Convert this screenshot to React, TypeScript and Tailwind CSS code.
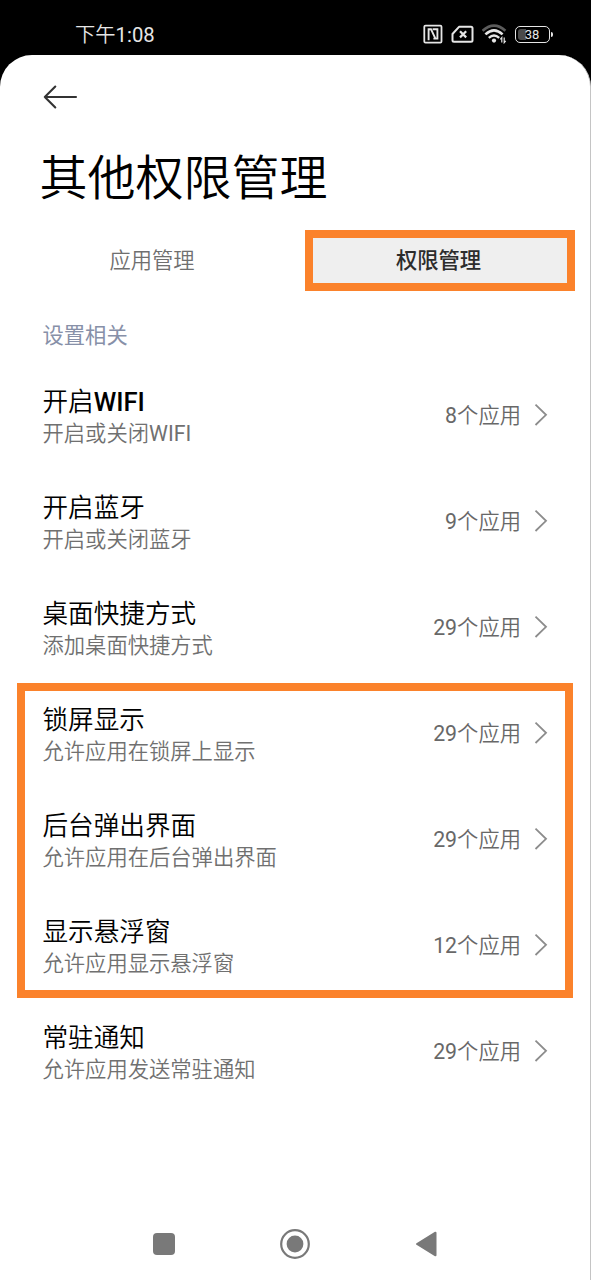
type Permission = {
  name: string;
  desc: string;
  count: number;
};

const before: Permission[] = [
  { name: "开启WIFI", desc: "开启或关闭WIFI", count: 8 },
  { name: "开启蓝牙", desc: "开启或关闭蓝牙", count: 9 },
  { name: "桌面快捷方式", desc: "添加桌面快捷方式", count: 29 },
];

const highlighted: Permission[] = [
  { name: "锁屏显示", desc: "允许应用在锁屏上显示", count: 29 },
  { name: "后台弹出界面", desc: "允许应用在后台弹出界面", count: 29 },
  { name: "显示悬浮窗", desc: "允许应用显示悬浮窗", count: 12 },
];

const after: Permission[] = [
  { name: "常驻通知", desc: "允许应用发送常驻通知", count: 29 },
];

function StatusBar() {
  return (
    <div className="flex h-[55px] items-start justify-between pl-[75px] pr-[38px] text-[#e6e6e6]">
      <span className="mt-[21px] h-7 text-[20.3px] font-[350] leading-7">
        下午<span className="font-normal">1:08</span>
      </span>
      <div className="mt-[24px] flex h-5 items-center">
        {/* NFC */}
        <svg width="20" height="20" viewBox="0 0 20 20" fill="none" stroke="currentColor">
          <rect x="1.3" y="1.6" width="17.2" height="17" rx="1.2" strokeWidth="1.8" />
          <path d="M5.6 16.2V5.2H8l4.2 9" strokeWidth="1.9" />
          <path d="M9.6 5.2h4.8v9.4h-4" strokeWidth="1.9" />
        </svg>
        {/* No SIM */}
        <svg className="ml-[8px]" width="23" height="20" viewBox="0 0 23 20" fill="none" stroke="currentColor">
          <path d="M8 2.8h12a1.5 1.5 0 0 1 1.5 1.5v12a1.5 1.5 0 0 1-1.5 1.5H3a1.5 1.5 0 0 1-1.5-1.5V10Z" strokeWidth="2" strokeLinejoin="round" />
          <path d="m9 7.2 6.2 6.2m0-6.2L9 13.4" strokeWidth="2.2" />
        </svg>
        {/* Wi-Fi */}
        <svg className="ml-[8px]" width="26" height="20" viewBox="0 0 26 20" fill="none" stroke="currentColor">
          <path d="M.6 6.8Q12-3.4 23.4 6.8" strokeWidth="2.6" stroke="#5c5c5c" />
          <path d="M3.4 10.4Q12 2.2 20.6 10.4" strokeWidth="2.6" />
          <path d="M6.8 13.8Q12 9.2 17.2 13.8" strokeWidth="2.4" />
          <circle cx="12" cy="16.6" r="2.1" fill="currentColor" stroke="none" />
          <path d="M19.8 18.6v-5l-1.5 1.8M22.2 13.6v5l1.5-1.8" strokeWidth="1.2" />
        </svg>
        {/* Battery */}
        <div className="ml-[7px] flex items-center">
          <div className="relative flex h-[17px] w-[35px] items-center justify-center rounded-[5px] border-[1.5px] border-[#e6e6e6]">
            <div className="absolute left-[2px] top-[2px] h-[11px] w-[8px] rounded-l-[3px] bg-[#4a4a4a]" />
            <span className="relative mr-px mt-px text-[13px] leading-none">38</span>
          </div>
          <div className="ml-px h-[5px] w-[2px] rounded-r bg-[#e6e6e6]" />
        </div>
      </div>
    </div>
  );
}

function PermissionRow({ name, desc, count }: Permission) {
  const wifi = name.endsWith("WIFI");

  return (
    <div className="flex h-[106px] items-start justify-between pl-[42.5px] pr-[42px]">
      <div className="pt-[25px]">
        <p className="h-[31px] whitespace-nowrap text-[25.6px] font-[350] leading-[31px] text-black">
          {name.replace("WIFI", "")}
          {wifi && <span className="font-medium">WIFI</span>}
        </p>
        <p className="h-8 whitespace-nowrap text-[21.3px] font-[350] leading-8 text-[#707070]">
          {desc.replace("WIFI", "")}
          {wifi && <span className="font-normal">WIFI</span>}
        </p>
      </div>
      <div className="flex items-center pt-[36px]">
        <span className="mt-[2px] h-8 whitespace-nowrap text-[21.3px] font-[350] leading-8 text-[#686868]">
          <span className="font-normal">{count}</span>个应用
        </span>
        <svg className="ml-[13px]" width="14" height="24" viewBox="0 0 14 24" fill="none" stroke="#8c8c8c" strokeWidth="1.8">
          <path d="M1.5 1.6 12 11.8 1.5 22" />
        </svg>
      </div>
    </div>
  );
}

function NavBar() {
  return (
    <div className="flex h-[30px] items-center pl-[153px] text-[#797979]">
      <div className="h-[22px] w-[22px] rounded-[4px] bg-[#797979]" />
      <svg className="ml-[105px]" width="30" height="30" viewBox="0 0 30 30">
        <circle cx="15" cy="15" r="13.8" fill="none" stroke="currentColor" strokeWidth="2.2" />
        <circle cx="15" cy="15" r="8.4" fill="currentColor" />
      </svg>
      <svg className="ml-[105px]" width="23" height="26" viewBox="0 0 23 26">
        <path d="M2 13 20.5 1.7v22.6Z" fill="currentColor" stroke="currentColor" strokeWidth="2" strokeLinejoin="round" />
      </svg>
    </div>
  );
}

export default function App() {
  return (
    <div className="h-[1280px] w-[591px] overflow-hidden bg-black font-['Roboto','Noto_Sans_CJK_SC',sans-serif]" lang="zh-CN">
      <StatusBar />
      <main className="flex h-[1225px] flex-col rounded-t-[32px] border-r border-[#c4c4c4] bg-white">
        <svg className="ml-[43px] mt-[30px] shrink-0" width="35" height="24" viewBox="0 0 35 24" fill="none" stroke="#333333" strokeWidth="2.1" strokeLinecap="round" strokeLinejoin="round">
          <path d="M12.3 1.5 1.8 12l10.5 10.5M1.8 12H33" />
        </svg>
        <h1 className="ml-[39.5px] mt-[38px] h-16 text-[48px] font-[350] leading-[64px] text-black">其他权限管理</h1>

        {/* Tabs */}
        <div className="mt-[19px] flex h-[61px] shrink-0">
          <div className="w-[304px] text-center text-[21.3px] font-[350] leading-[61px] text-[#6f6f6f]">应用管理</div>
          <div className="ml-px w-[270px] border-8 border-[#fb822b] bg-[#efefef] pr-[3px] text-center text-[21.3px] font-medium leading-[46px] text-[#2c2c2c]">
            权限管理
          </div>
        </div>

        <h2 className="ml-[42.5px] mt-[29px] h-8 text-[21.3px] font-normal leading-8 text-[#8790a8]">设置相关</h2>

        <div className="mt-[10px]">
          {before.map((item) => (
            <PermissionRow key={item.name} {...item} />
          ))}
          <div className="relative">
            {highlighted.map((item) => (
              <PermissionRow key={item.name} {...item} />
            ))}
            <div className="absolute bottom-0 left-[17px] right-[17px] top-[3px] border-8 border-[#fb822b]" />
          </div>
          {after.map((item) => (
            <PermissionRow key={item.name} {...item} />
          ))}
        </div>

        <div className="mt-[125px]">
          <NavBar />
        </div>
      </main>
    </div>
  );
}
